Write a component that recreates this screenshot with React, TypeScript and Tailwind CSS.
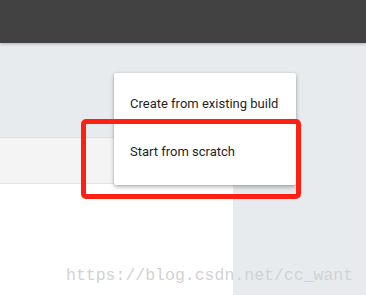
export default function App() {
  return (
    <div className="relative w-[366px] h-[295px] overflow-hidden bg-[#e8ebee] flex flex-col" style={{ fontFamily: 'Roboto, "Liberation Sans", sans-serif' }}>
      <div className="h-[43px] shrink-0 bg-[#424242] shadow-[0_1px_3px_rgba(0,0,0,0.25)] z-10" />

      <div className="flex-1 flex min-h-0">
        <div className="w-[233px] flex flex-col pt-[94px]">
          <div className="flex-1 flex flex-col bg-white border-t border-[#dde0e3]">
            <div className="h-[46px] bg-[#f4f4f4] border-b border-[#e2e2e2]" />
            <div className="flex-1" />
          </div>
        </div>
        <div className="flex-1" />
      </div>

      {/* dropdown menu */}
      <div className="absolute left-[114px] top-[73px] w-[182px] bg-white rounded-[2px] pt-[7px] pb-[9px] shadow-[0_2px_4px_rgba(0,0,0,0.3),0_0_2px_rgba(0,0,0,0.12)] z-20">
        <div className="h-[48px] flex items-center pl-[16px] text-[13px] text-[#1f1f1f]">Create from existing build</div>
        <div className="h-[48px] flex items-center pl-[16px] text-[13px] text-[#1f1f1f]">Start from scratch</div>
      </div>

      {/* highlight */}
      <div className="absolute left-[81px] top-[119px] w-[220px] h-[80px] border-[5px] border-[#ff2014] rounded-[5px] z-30" />

      {/* watermark */}
      <div
        className="absolute left-[66px] top-[264px] text-[16.5px] leading-[24px] text-[#d2d2d2] z-40"
        style={{ fontFamily: '"Liberation Mono", monospace' }}
      >
        https://blog.csdn.net/cc_want
      </div>
    </div>
  );
}
